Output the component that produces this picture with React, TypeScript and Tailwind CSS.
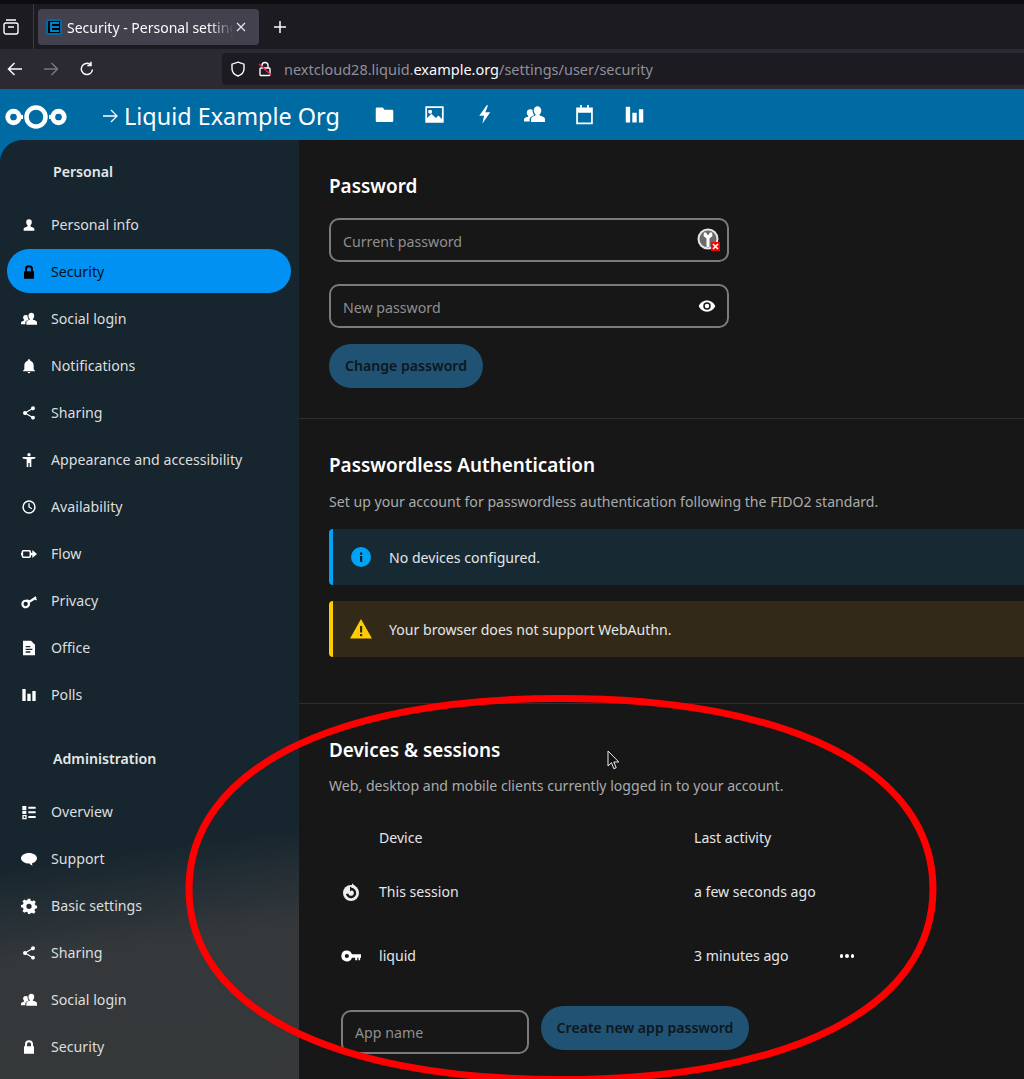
const FONT = "font-['Noto_Sans',sans-serif]";

const P = {
  person: "M12 3.500a4.200 4.200 0 0 1 4.200 4.400c0 2-1 3.600-2 4.400v1.400c0 .9 5.800 1.600 5.800 4V20.500H4v-2.800c0-2.400 5.800-3.100 5.800-4v-1.400c-1-.8-2-2.400-2-4.400A4.200 4.200 0 0 1 12 3.500Z",
  lock: "M12 2a6 6 0 0 0-6 6v3H4.500v11h15V11H18V8a6 6 0 0 0-6-6Zm0 3a3 3 0 0 1 3 3v3H9V8a3 3 0 0 1 3-3Z",
  group: "M15 2.500a4.800 4.800 0 0 1 4.800 5c0 2-1 3.600-2 4.400v1c0 .8 6.200 1.200 6.200 4.300V20.500H8v-3.300c0-3.100 5.200-3.500 5.200-4.300v-1c-1-.8-2-2.400-2-4.400a4.800 4.800 0 0 1 3.800-4.900ZM7.500 6a3.500 3.500 0 0 1 2.400.9c-.2 2 .4 4 1.600 5.300v.6c-.9.900-5 1.500-5 4.900v2.300H0v-2.500c0-2.400 4.700-2.700 4.700-3.300v-1c-.7-.6-1.500-1.800-1.500-3.300A3.700 3.700 0 0 1 7.500 6Z",
  bell: "M21,19V20H3V19L5,17V11C5,7.900 7.030,5.170 10,4.290C10,4.190 10,4.100 10,4A2,2 0 0,1 12,2A2,2 0 0,1 14,4C14,4.100 14,4.190 14,4.290C16.970,5.170 19,7.900 19,11V17L21,19M14,21A2,2 0 0,1 12,23A2,2 0 0,1 10,21",
  share: "M18,16.080C17.240,16.080 16.560,16.380 16.040,16.850L8.910,12.700C8.960,12.470 9,12.240 9,12C9,11.760 8.960,11.530 8.910,11.300L15.960,7.190C16.500,7.690 17.210,8 18,8A3,3 0 0,0 21,5A3,3 0 0,0 18,2A3,3 0 0,0 15,5C15,5.240 15.040,5.470 15.090,5.700L8.040,9.810C7.500,9.310 6.790,9 6,9A3,3 0 0,0 3,12A3,3 0 0,0 6,15C6.790,15 7.500,14.690 8.040,14.190L15.160,18.340C15.110,18.550 15.080,18.770 15.080,19C15.080,20.610 16.390,21.910 18,21.910C19.610,21.910 20.920,20.610 20.920,19A2.920,2.920 0 0,0 18,16.080Z",
  access: "M12 1.500a2.500 2.500 0 1 1 0 5 2.500 2.500 0 0 1 0-5ZM2.500 7.500h19v2.300l-6 1.200v11.500h-2.500v-6h-2v6H8.500V11l-6-1.200Z",
  clock: "M12 2a10 10 0 1 0 0 20 10 10 0 0 0 0-20Zm0 2.200a7.800 7.800 0 1 1 0 15.600 7.800 7.800 0 0 1 0-15.600ZM11 6.500v6l4.800 2.900 1-1.600-3.800-2.300v-5Z",
  flow: "M3.500 6h9A2.500 2.500 0 0 1 15 8.500V10h2V6l7 6-7 6v-4h-2v1.500a2.500 2.500 0 0 1-2.500 2.500h-9A2.500 2.500 0 0 1 1 15.500V14H0v-4h1V8.500A2.500 2.500 0 0 1 3.500 6Zm.5 2.200a.8.800 0 0 0-.8.800v6c0 .4.400.8.800.8h8a.8.800 0 0 0 .8-.8V9a.8.800 0 0 0-.8-.8Z",
  key2: "M7 10a6.500 6.500 0 1 0 6.300 4.800l7.700-5.100 1.300 1.500 1.700-1.300-1.600-1.900 1-.8-1.600-2.400L13 10.900A6.500 6.500 0 0 0 7 10Zm0 3.300a3.200 3.200 0 1 1 0 6.400 3.200 3.200 0 0 1 0-6.400Z",
  doc: "M3 1h12l6 6v16H3Zm4 8v2h7V9Zm0 4v2h10v-2Zm0 4v2h7v-2Z",
  bars: "M2 3h5v18H2Zm7.500 7h5v11h-5ZM17 6h5v15h-5Z",
  list: "M2 3h6v6H2Zm9 1h11v3H11Zm0 7h11v3H11Zm-9-1h6v5H2Zm9 8h11v3H11ZM2 16.500h6.500V23H2Zm2 2V21h2.500v-2.500Z",
  chat: "M12 3C5.400 3 0 6.600 0 11c0 3 2.700 5.600 6.500 7 2 .7 4.500 .9 6.500 .9.700 1.300 2.200 2.600 4.500 3.100-.7-.8-1-2-.9-3.600C21 17.200 24 14.400 24 11c0-4.400-5.400-8-12-8Z",
  gear: "M10 1h4l.6 3a8.300 8.300 0 0 1 2.300 1l2.500-1.700 2.800 2.800L20.500 8.600c.4.700.7 1.500.9 2.300l2.600.6v4l-3 .6a8 8 0 0 1-.9 2.200l1.700 2.600-2.800 2.800-2.600-1.700a8 8 0 0 1-2.300.9L13.500 24h-3l-.6-2.600a8 8 0 0 1-2.300-.9L5 22.200l-2.800-2.800 1.700-2.600a8 8 0 0 1-.9-2.200L0 14v-3.500l3-.6c.2-.8.500-1.600.9-2.300L2.200 5l2.800-2.800 2.500 1.700c.7-.4 1.500-.7 2.300-.9ZM12 8.500a4 4 0 1 0 0 8 4 4 0 0 0 0-8Z",
  folder: "M10 4H3.500C2.600 4 2 4.700 2 5.500V19c0 .8.600 1.500 1.500 1.500h17c.9 0 1.500-.7 1.500-1.500V8c0-.8-.6-1.500-1.500-1.500H12Z",
  image: "M1.500 2.500h21v19h-21Zm2 2v11.500l5-5 5 5 3-3 4 4V4.500ZM7 6.500a2.300 2.300 0 1 1 0 4.600 2.300 2.300 0 0 1 0-4.600Z",
  flash: "M14.500 1.500 6 13.500h5.500l-2 9 9-13h-5.500l3-8Z",
  calendar: "M7 1h2v3h6V1h2v3h4.500v19h-19V4H7Zm-2.500 9v11h15V10Z",
  eye: "M12 4.500C7 4.500 2.700 7.600 1 12c1.700 4.400 6 7.500 11 7.500s9.300-3.100 11-7.500c-1.700-4.400-6-7.500-11-7.500Zm0 12.500a5 5 0 1 1 0-10 5 5 0 0 1 0 10Zm0-8a3 3 0 1 0 0 6 3 3 0 0 0 0-6Z",
  keyH: "M7 5.500a6.500 6.500 0 1 0 6.100 8.500H17v3h2.500v-3H21v3h2v-3h1v-4H13.100A6.500 6.500 0 0 0 7 5.500Zm0 4a2.500 2.500 0 1 1 0 5 2.500 2.500 0 0 1 0-5Z",
};

function Ic({ d, size = 16, className = "text-white" }: { d: string; size?: number; className?: string }) {
  return (
    <svg width={size} height={size} viewBox="0 0 24 24" fill="currentColor" fillRule="evenodd" className={`shrink-0 ${className}`}>
      <path d={d} />
    </svg>
  );
}

function NavItem({ d, label, active = false }: { d: string; label: string; active?: boolean }) {
  return (
    <div className={`flex h-11 mb-[3px] w-[284px] items-center rounded-full pt-[2px] ${active ? "bg-[#0091f2] text-[#02121c]" : "text-[#dcdedf]"}`}>
      <div className="flex w-11 justify-center">
        <Ic d={d} size={16} className={active ? "text-black" : "text-white"} />
      </div>
      <span className="text-[14.200px]">{label}</span>
    </div>
  );
}

function Heading({ children }: { children: string }) {
  return <div className="pl-[53px] text-[14.150px] leading-5 font-semibold text-[#e6e7e8]">{children}</div>;
}

function PwInput({ placeholder, children }: { placeholder: string; children: React.ReactNode }) {
  return (
    <div className="relative h-11 w-[400px]">
      <input
        placeholder={placeholder}
        className="h-11 w-full rounded-[10px] border-2 border-[#7b7b7b] bg-transparent pt-[2px] pl-3 text-[14.200px] text-white outline-none placeholder:text-[#8f8f8f]"
      />
      {children}
    </div>
  );
}

function Row({ icon, name, time, more = false }: { icon: React.ReactNode; name: string; time: string; more?: boolean }) {
  return (
    <div className="grid h-16 grid-cols-[50px_315px_138px_30px] items-center text-[14.100px] text-[#e4e6e8]">
      <div className="flex justify-center pr-[6px]">{icon}</div>
      <span>{name}</span>
      <span>{time}</span>
      {more ? (
        <div className="flex justify-center gap-[2px]">
          <i className="size-[3.500px] rounded-full bg-white" />
          <i className="size-[3.500px] rounded-full bg-white" />
          <i className="size-[3.500px] rounded-full bg-white" />
        </div>
      ) : (
        <span />
      )}
    </div>
  );
}

function Browser() {
  return (
    <div className="shrink-0">
      <div className="h-1 bg-[#0d0d0f]" />
      <div className="flex h-[45px] items-center bg-[#1c1b22]">
        <div className="flex h-full w-[34px] items-center border-r border-[#3a3a42] pl-[3px]">
          <svg width="16" height="16" viewBox="0 0 16 16" fill="none" stroke="#fbfbfe" strokeWidth="1.400">
            <rect x="1" y="4" width="14" height="11" rx="2" />
            <path d="M3 1h10M5 8h6" />
          </svg>
        </div>
        <div className="ml-1 flex h-9 w-[221px] items-center rounded-[4px] bg-[#42414d] pl-2">
          <svg width="16" height="16" viewBox="0 0 16 16" className="shrink-0">
            <rect width="16" height="16" rx="2" fill="#006aa3" />
            <rect x="2" y="2" width="12" height="12" fill="#000" />
            <path d="M4 3h9v2H6v2h7v2H6v2h7v2H4Z" fill="#0082c9" />
          </svg>
          <span className="ml-[5px] w-[167px] overflow-hidden pt-[1px] text-[14px] whitespace-nowrap text-[#fbfbfe] [mask-image:linear-gradient(90deg,#000_85%,transparent)]">
            Security - Personal settings
          </span>
          <svg width="12" height="12" viewBox="0 0 12 12" stroke="#e8e8ec" strokeWidth="1.200" className="ml-[1px]">
            <path d="M2 2l8 8M10 2l-8 8" />
          </svg>
        </div>
        <svg width="14" height="14" viewBox="0 0 14 14" stroke="#fbfbfe" strokeWidth="1.500" className="ml-[14px]">
          <path d="M7 1v12M1 7h12" />
        </svg>
      </div>
      <div className="flex h-10 items-center bg-[#2b2a33]">
        <svg width="16" height="16" viewBox="0 0 16 16" fill="none" stroke="#fbfbfe" strokeWidth="1.500" className="ml-[7px]">
          <path d="M15 8H1.500M7.500 2L1.500 8l6 6" />
        </svg>
        <svg width="16" height="16" viewBox="0 0 16 16" fill="none" stroke="#77767d" strokeWidth="1.500" className="ml-[20px]">
          <path d="M1 8h13.500M8.500 2l6 6-6 6" />
        </svg>
        <svg width="16" height="16" viewBox="0 0 16 16" fill="none" stroke="#fbfbfe" strokeWidth="1.500" className="ml-[20px]">
          <path d="M13.500 8.500A5.600 5.600 0 1 1 11.500 3.600M12 .8v3.700H8.300" />
        </svg>
        <div className="ml-[127px] flex h-8 flex-1 items-center rounded-l-[4px] bg-[#1c1b22] pl-[8px]">
          <svg width="16" height="16" viewBox="0 0 16 16" fill="none" stroke="#fbfbfe" strokeWidth="1.400">
            <path d="M8 1.200l6 2v4.500c0 3.500-2.500 6-6 7.300-3.500-1.300-6-3.800-6-7.300V3.200Z" />
          </svg>
          <svg width="16" height="16" viewBox="0 0 16 16" fill="none" className="ml-[11px]">
            <path d="M5 7V4.500a3 3 0 0 1 6 0V7" stroke="#fbfbfe" strokeWidth="1.400" />
            <rect x="3" y="7" width="10" height="7.500" rx="1" stroke="#fbfbfe" strokeWidth="1.400" />
            <path d="M2 3l12 11" stroke="#e22850" strokeWidth="1.500" />
          </svg>
          <span className="ml-[11px] pt-[1px] text-[14.500px] text-[#8f8f9d]">
            nextcloud28.liquid.<span className="text-[#fbfbfe]">example.org</span>/settings/user/security
          </span>
        </div>
      </div>
    </div>
  );
}

function Logo() {
  return (
    <svg width="62" height="32" viewBox="0 0 62 32" fill="none" stroke="#fff" className="mt-[5px] shrink-0">
      <circle cx="8.500" cy="16" r="5.750" strokeWidth="4.800" />
      <circle cx="31" cy="16" r="9.500" strokeWidth="4.500" />
      <circle cx="53.500" cy="16" r="5.750" strokeWidth="4.800" />
      <path d="M14 16h4M44 16h4" strokeWidth="4" />
    </svg>
  );
}

function Header() {
  const items = [P.folder, P.image, P.flash, P.group, P.calendar, P.bars];
  return (
    <div className="flex h-[51px] shrink-0 items-center bg-[#006aa3] pl-[5px] text-white">
      <Logo />
      <svg width="16" height="14" viewBox="0 0 16 14" fill="none" stroke="#fff" strokeWidth="1.300" className="mt-[3px] ml-[35px]">
        <path d="M1 7h14M9 1l6 6-6 6" />
      </svg>
      <span className="mt-[2px] ml-[6px] w-[235px] text-[23.400px] leading-8 whitespace-nowrap">Liquid Example Org</span>
      <div className="flex">
        {items.map((d, i) => (
          <div key={i} className="flex w-[50px] justify-center">
            <Ic d={d} size={21} />
          </div>
        ))}
      </div>
    </div>
  );
}

function Sidebar() {
  return (
    <aside className="w-[299px] shrink-0 overflow-hidden rounded-tl-[22px] bg-[linear-gradient(172deg,#16252e_0%,#16252e_74%,#34383b_84%,#363839_100%)] pt-[22px] pl-[7px]">
      <div className="-ml-[7px]">
        <Heading>Personal</Heading>
      </div>
      <div className="mt-[20px]">
        <NavItem d={P.person} label="Personal info" />
        <NavItem d={P.lock} label="Security" active />
        <NavItem d={P.group} label="Social login" />
        <NavItem d={P.bell} label="Notifications" />
        <NavItem d={P.share} label="Sharing" />
        <NavItem d={P.access} label="Appearance and accessibility" />
        <NavItem d={P.clock} label="Availability" />
        <NavItem d={P.flow} label="Flow" />
        <NavItem d={P.key2} label="Privacy" />
        <NavItem d={P.doc} label="Office" />
        <NavItem d={P.bars} label="Polls" />
      </div>
      <div className="-ml-[7px] mt-[33px]">
        <Heading>Administration</Heading>
      </div>
      <div className="mt-[20px]">
        <NavItem d={P.list} label="Overview" />
        <NavItem d={P.chat} label="Support" />
        <NavItem d={P.gear} label="Basic settings" />
        <NavItem d={P.share} label="Sharing" />
        <NavItem d={P.group} label="Social login" />
        <NavItem d={P.lock} label="Security" />
      </div>
    </aside>
  );
}

function Main() {
  return (
    <main className="min-w-0 flex-1 overflow-hidden bg-[#171717] text-[#e4e6e8]">
      <section className="h-[279px] border-b border-[#2e2e2e] pt-[33px] pl-[30px]">
        <h2 className="text-[18.900px] leading-[26px] font-semibold text-white">Password</h2>
        <div className="mt-[19px] flex flex-col gap-[22px]">
          <PwInput placeholder="Current password">
            <div className="absolute top-[10px] right-[8px] size-[24px]">
              <svg width="24" height="24" viewBox="0 0 24 24">
                <circle cx="11" cy="11" r="10.500" fill="#e8e8e8" />
                <circle cx="11" cy="11" r="8.500" fill="#6a6a6a" />
                <path d="M7 4.500h2l2 3 2-3h2l.5 3.500-3 2.500V19h-3v-8.500L6.500 8Z" fill="#fff" />
                <rect x="14" y="14" width="9" height="9" fill="#ff0000" />
                <path d="M16 16l5 5M21 16l-5 5" stroke="#fff" strokeWidth="1.600" />
              </svg>
            </div>
          </PwInput>
          <PwInput placeholder="New password">
            <div className="absolute top-[13px] right-[13px]">
              <Ic d={P.eye} size={18} />
            </div>
          </PwInput>
        </div>
        <button className="mt-4 h-11 w-[154px] rounded-full bg-[#205273] text-[14.100px] font-semibold text-[#0e1720]">Change password</button>
      </section>
      <section className="h-[285px] border-b border-[#2e2e2e] pt-[33px] pl-[30px]">
        <h2 className="text-[18.900px] leading-[26px] font-semibold text-white">Passwordless Authentication</h2>
        <p className="mt-[14px] text-[14.100px] leading-5 text-[#a9abac]">Set up your account for passwordless authentication following the FIDO2 standard.</p>
        <div className="mt-[17px] flex h-14 items-center rounded-l-[4px] border-l-4 border-[#00a2f5] bg-[#172932] pl-[18px] text-[14.100px]">
          <svg width="20" height="20" viewBox="0 0 20 20" className="shrink-0">
            <circle cx="10" cy="10" r="10" fill="#00a2f5" />
            <rect x="9" y="9" width="2.200" height="6" fill="#10212b" />
            <rect x="9" y="5.500" width="2.200" height="2.200" fill="#10212b" />
          </svg>
          <span className="ml-[18px] pt-[2px]">No devices configured.</span>
        </div>
        <div className="mt-4 flex h-14 items-center rounded-l-[4px] border-l-4 border-[#ffcc00] bg-[#332918] pl-[17px] text-[14.100px]">
          <svg width="22" height="20" viewBox="0 0 22 20" className="shrink-0">
            <path d="M11 0l11 19.500H0Z" fill="#ffcc00" />
            <rect x="10" y="7" width="2.200" height="6.500" fill="#332918" />
            <rect x="10" y="15" width="2.200" height="2.200" fill="#332918" />
          </svg>
          <span className="ml-[17px] pt-[2px]">Your browser does not support WebAuthn.</span>
        </div>
      </section>
      <section className="pt-[33px] pl-[30px]">
        <h2 className="text-[18.900px] leading-[26px] font-semibold text-white">Devices &amp; sessions</h2>
        <p className="mt-[13px] text-[14.100px] leading-5 text-[#a9abac]">Web, desktop and mobile clients currently logged in to your account.</p>
        <div className="mt-[29px] grid h-[26px] grid-cols-[50px_315px_138px] items-center text-[14.100px] text-[#e4e6e8]">
          <span />
          <span>Device</span>
          <span>Last activity</span>
        </div>
        <div className="mt-[9px]">
          <Row
            name="This session"
            time="a few seconds ago"
            icon={
              <svg width="18" height="18" viewBox="0 0 18 18" className="mt-[-1px]">
                <circle cx="9" cy="10" r="8" fill="#eee" />
                <path d="M10 0c.5 1.500 2.500 2 4 4l-4 1.500Z" fill="#eee" />
                <path d="M9 6a4 4 0 1 1-3.900 4.800" fill="none" stroke="#171717" strokeWidth="2.400" />
                <path d="M8 3.500l3 2.400L8 8.500Z" fill="#171717" />
              </svg>
            }
          />
          <Row name="liquid" time="3 minutes ago" more icon={<Ic d={P.keyH} size={20} />} />
        </div>
        <div className="mt-[18px] ml-3 flex items-start gap-3">
          <input
            placeholder="App name"
            className="mt-1 h-11 w-[188px] rounded-[10px] border-2 border-[#7b7b7b] bg-transparent pl-3 text-[14.200px] text-white outline-none placeholder:text-[#8f8f8f]"
          />
          <button className="h-11 w-[208px] rounded-full bg-[#205273] text-[14.100px] font-semibold text-[#0e1720]">Create new app password</button>
        </div>
      </section>
    </main>
  );
}

export default function App() {
  return (
    <div className={`relative flex h-[1079px] w-[1024px] flex-col overflow-hidden bg-[#006aa3] ${FONT}`}>
      <Browser />
      <Header />
      <div className="flex min-h-0 flex-1">
        <Sidebar />
        <Main />
      </div>
      <svg width="1024" height="1079" viewBox="0 0 1024 1079" fill="none" className="pointer-events-none absolute inset-0">
        <path
          d="M189 889C189 770.900 330.400 698.500 561 698.500C791.600 698.500 933 770.900 933 889C933 1007.100 791.600 1079.500 561 1079.500C330.400 1079.500 189 1007.100 189 889Z"
          stroke="#ff0000"
          strokeWidth="7"
        />
      </svg>
      <svg width="14" height="22" viewBox="0 0 14 22" className="pointer-events-none absolute top-[750px] left-[607px]">
        <path d="M1 1v15l3.500-3.300 2.300 6 2.400-1-2.400-5.700h5Z" fill="#111" stroke="#eee" strokeWidth="1" />
      </svg>
    </div>
  );
}
